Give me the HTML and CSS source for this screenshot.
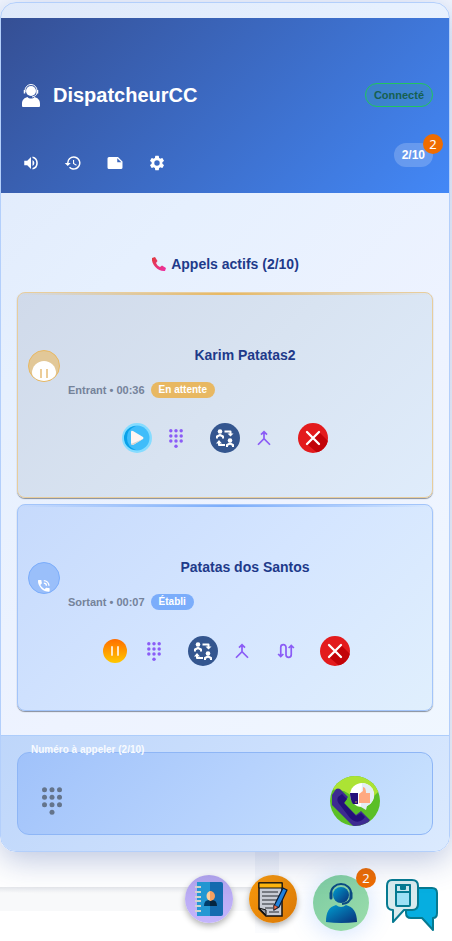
FILE: index.html
```html
<!DOCTYPE html>
<html lang="fr">
<head>
<meta charset="utf-8">
<meta name="viewport" content="width=device-width, initial-scale=1">
<title>DispatcheurCC</title>
<link rel="stylesheet" href="styles.css">
</head>
<body>
<svg class="defs" aria-hidden="true">
  <defs>
    <linearGradient id="sun" x2="0" y2="1"><stop stop-color="#ff6d00"/><stop offset="1" stop-color="#ffc800"/></linearGradient>
    <linearGradient id="agent-fill" x2="1" y2="1"><stop stop-color="#009ed0"/><stop offset="1" stop-color="#0a2f78"/></linearGradient>
    <linearGradient id="phone-fill" x2="1" y2="1"><stop stop-color="#e03a3a"/><stop offset="1" stop-color="#ee30a8"/></linearGradient>
    <clipPath id="round"><circle cx="25" cy="25" r="25"/></clipPath>
    <clipPath id="round-small"><circle cx="15" cy="15" r="15"/></clipPath>
  </defs>
  <symbol id="dialpad" viewBox="4 1 16 22">
    <circle cx="6" cy="3" r="2"/><circle cx="12" cy="3" r="2"/><circle cx="18" cy="3" r="2"/>
    <circle cx="6" cy="9" r="2"/><circle cx="12" cy="9" r="2"/><circle cx="18" cy="9" r="2"/>
    <circle cx="6" cy="15" r="2"/><circle cx="12" cy="15" r="2"/><circle cx="18" cy="15" r="2"/>
    <circle cx="12" cy="21" r="2"/>
  </symbol>
  <symbol id="transfer" viewBox="0 0 30 30">
    <circle cx="15" cy="15" r="15" fill="#34568f"/>
    <g fill="#fff"><circle cx="10" cy="8.500" r="2.300"/><circle cx="20" cy="17.500" r="2.300"/></g>
    <g fill="none" stroke="#fff" stroke-width="2" stroke-linejoin="round">
      <path d="M7 15.500v-2l3-1.500 3 1.500v2"/>
      <path d="M17 24v-2l3-1.500 3 1.500v2"/>
      <path d="M14.500 8.500h6V11M15 22H9v-2.500"/>
    </g>
    <path fill="#fff" d="M17.500 10.500h6l-3 3zM6 20.500h6l-3-3.500z"/>
  </symbol>
  <symbol id="merge" viewBox="0 0 24 24">
    <path fill="none" stroke="currentColor" stroke-width="2.300" d="M4 21l8-8 8 8M12 14V4M8 7.500l4-4 4 4"/>
  </symbol>
  <symbol id="hangup" viewBox="0 0 30 30">
    <circle cx="15" cy="15" r="15" fill="#e31b1d"/>
    <path clip-path="url(#round-small)" fill="#c20308" d="M21 9l12 12-9 13-15-13z"/>
    <path stroke="#fff" stroke-width="2.300" stroke-linecap="round" d="M9 9l12 12M21 9L9 21"/>
  </symbol>
</svg>

<main class="panel">
  <header class="top">
    <div class="title-row">
      <svg class="operator" viewBox="0 0 24 28" fill="#fff"><circle cx="12" cy="10" r="5"/><path d="M3 25v-2c0-4 2-6 5.500-7 1.500 2 5.500 2 7 0 3.500 1 5.500 3 5.500 7v2q0 1-1 1H4q-1 0-1-1z"/><path fill="none" stroke="#fff" d="M6 11V9.500a6 6 0 0 1 12 0v2c0 2.500-2 4-5 4.500"/><path stroke="#fff" stroke-width="1.500" d="M5.500 9v3.500M18.500 9v3.500"/></svg>
      <h1>DispatcheurCC</h1>
      <span class="status">Connecté</span>
    </div>
    <div class="tool-row">
      <button aria-label="Volume"><svg viewBox="0 0 24 24"><path d="M3 9v6h4l5 5V4L7 9H3zm13.500 3A4.500 4.500 0 0 0 14 8v8a4.500 4.500 0 0 0 2.500-4zM14 3.200v2.100a7 7 0 0 1 0 13.400v2.100a9 9 0 0 0 0-17.600z"/></svg></button>
      <button aria-label="Historique"><svg viewBox="0 0 24 24"><path d="M13 3a9 9 0 0 0-9 9H1l4 4 4-4H6a7 7 0 1 1 2.060 4.940l-1.420 1.420A9 9 0 1 0 13 3zm-1 5v5l4.280 2.540.72-1.210-3.500-2.080V8H12z"/></svg></button>
      <button aria-label="Notes"><svg viewBox="0 0 24 24"><path fill-rule="evenodd" d="M16 4H4a2 2 0 0 0-2 2v12a2 2 0 0 0 2 2h16a2 2 0 0 0 2-2v-8zm-1 1.500V11h5.500z"/></svg></button>
      <button aria-label="Paramètres"><svg viewBox="0 0 24 24"><path d="M19.140 12.940c.04-.3.06-.61.06-.94s-.02-.64-.07-.94l2.030-1.580a.5.5 0 0 0 .12-.61l-1.920-3.320a.5.5 0 0 0-.59-.22l-2.390.96a7 7 0 0 0-1.620-.94l-.36-2.540a.5.5 0 0 0-.48-.41h-3.840a.5.5 0 0 0-.47.410l-.36 2.540a7 7 0 0 0-1.620.94l-2.390-.96a.5.5 0 0 0-.59.220L2.740 8.870a.5.5 0 0 0 .12.610l2.030 1.580a6 6 0 0 0 0 1.880l-2.030 1.580a.5.5 0 0 0-.12.610l1.920 3.320c.12.220.37.290.59.220l2.390-.96c.5.380 1.030.7 1.620.94l.36 2.540c.05.240.24.410.48.410h3.840c.24 0 .44-.17.47-.41l.36-2.540a7 7 0 0 0 1.620-.94l2.390.96c.22.080.47 0 .59-.22l1.920-3.320a.5.5 0 0 0-.12-.61zM12 15.600A3.600 3.600 0 1 1 12 8.400a3.600 3.600 0 0 1 0 7.200z"/></svg></button>
      <span class="counter">2/10<span class="badge">2</span></span>
    </div>
  </header>

  <section class="calls">
    <h2><svg viewBox="0 0 16 16"><path fill="url(#phone-fill)" d="M1 2l3-1 2.500 4-1.500 2c1 2 2 3 4 4l2-1.500 4 2.500-1 3C8 16 0 9 1 2z"/></svg>Appels actifs (2/10)</h2>

    <article class="card waiting">
      <div class="call">
        <span class="avatar"><svg viewBox="0 0 30 30"><circle cx="15" cy="22" r="12" fill="#fff"/><path stroke="#e6bd77" stroke-width="1.500" d="M12 18v9M18 18v9"/></svg></span>
        <div class="info">
          <h3>Karim Patatas2</h3>
          <p>Entrant • 00:36 <span class="tag">En attente</span></p>
        </div>
      </div>
      <div class="actions">
        <button aria-label="Reprendre"><svg viewBox="0 0 30 30"><circle cx="15" cy="15" r="15" fill="#86dcff"/><circle cx="15" cy="15" r="12.500" fill="#40bdfa"/><path fill="#0aa2e9" d="M14 3a12 12 0 0 0 0 24q-9-3-9-12t9-12z"/><path fill="#fff5f2" d="M9 9q0-2 2-1l10 6q1 1 0 2l-10 6q-2 0-2-2z"/><path fill="#d8d3cf" d="M9 21l12-5-10 6q-2 0-2-1z"/></svg></button>
        <button class="plain" aria-label="Clavier"><svg class="keys"><use href="#dialpad"/></svg></button>
        <button aria-label="Transférer"><svg><use href="#transfer"/></svg></button>
        <button class="plain" aria-label="Fusionner"><svg><use href="#merge"/></svg></button>
        <button aria-label="Raccrocher"><svg><use href="#hangup"/></svg></button>
      </div>
    </article>

    <article class="card active">
      <div class="call">
        <span class="avatar"><svg viewBox="0 0 30 30"><g transform="translate(7 15) scale(.65)" fill="#fff"><path d="M20 15.500c-1.250 0-2.450-.2-3.570-.57a1 1 0 0 0-1 .24l-2.200 2.200a15 15 0 0 1-6.600-6.600l2.200-2.200a1 1 0 0 0 .25-1A11 11 0 0 1 8.500 4a1 1 0 0 0-1-1H4a1 1 0 0 0-1 1 17 17 0 0 0 17 17 1 1 0 0 0 1-1v-3.500a1 1 0 0 0-1-1zM19 12h2a9 9 0 0 0-9-9v2a7 7 0 0 1 7 7zm-4 0h2a5 5 0 0 0-5-5v2a3 3 0 0 1 3 3z"/></g></svg></span>
        <div class="info">
          <h3>Patatas dos Santos</h3>
          <p>Sortant • 00:07 <span class="tag">Établi</span></p>
        </div>
      </div>
      <div class="actions">
        <button aria-label="Mettre en attente"><svg viewBox="0 0 30 30"><circle cx="15" cy="15" r="12" fill="url(#sun)"/><path stroke="#ffe6c4" stroke-width="2" stroke-linecap="round" d="M12 11v8M18 11v8"/></svg></button>
        <button class="plain" aria-label="Clavier"><svg class="keys"><use href="#dialpad"/></svg></button>
        <button aria-label="Transférer"><svg><use href="#transfer"/></svg></button>
        <button class="plain" aria-label="Fusionner"><svg><use href="#merge"/></svg></button>
        <button class="plain" aria-label="Permuter"><svg viewBox="0 0 24 24" fill="none" stroke="currentColor" stroke-width="2.300"><path d="M5 19V7a3.500 3.500 0 0 1 7 0v10a3.500 3.500 0 0 0 7 0V5M1.500 16L5 19.500 8.500 16M15.500 8L19 4.500 22.500 8"/></svg></button>
        <button aria-label="Raccrocher"><svg><use href="#hangup"/></svg></button>
      </div>
    </article>
  </section>

  <footer class="dialer">
    <div class="field">
      <label for="number">Numéro à appeler (2/10)</label>
      <button class="open-keys" aria-label="Clavier"><svg><use href="#dialpad"/></svg></button>
      <input id="number" type="tel">
      <button class="dial" aria-label="Appeler"><svg viewBox="0 0 50 50"><g clip-path="url(#round)"><path fill="#5abf26" d="M0 0h50v50H0z"/><path fill="#ace334" d="M0 13V0h50v14L36 28 14 15z"/><path fill="#3d2b91" d="M2 19l4-6q2-1 4 0l8 8-4 6 12 12 5-4 9 9-6 8H25L2 29z"/><path fill="#24107a" d="M8 21l4-3 5 5-3 4 12 13 5-3 4 4c-4 6-10 6-15 1L10 29q-4-4-2-8z"/><circle cx="32" cy="19" r="12" fill="#fff"/><path fill="#e3edf4" d="M32 7a12 12 0 0 1 5 23l-1 4-5-3z"/><path fill="#24107a" d="M20 17h8v11h-5q-3-4-3-11z"/><path fill="#ffa980" d="M29 18l4-3v-4q3 0 3 6h4v10H29z"/><circle cx="26" cy="26" r=".7" fill="#f9c22e"/></g></svg></button>
    </div>
  </footer>
</main>

<nav class="dock">
  <button class="contacts" aria-label="Contacts"><svg viewBox="0 0 48 48"><path fill="#2398d3" d="M12 7h14v34H12z"/><path fill="#166cb0" d="M25 7h11q2 0 2 2v30q0 2-2 2H25z"/><path stroke="#d0d3cf" stroke-width="2" d="M10 12h6M10 17h6M10 22h6M10 26h6M10 31h6M10 36h6"/><path fill="#003e6b" d="M19 31q0-6 5-6h2v6z"/><path fill="#052540" d="M25 25h2q5 0 5 6h-7z"/><path fill="#ffce9c" d="M26 16a4.500 5 0 0 0 0 10z"/><path fill="#f7a060" d="M25 16a5 5 0 0 1 0 10z"/></svg></button>
  <button class="notes" aria-label="Notes"><svg viewBox="0 0 48 48"><path fill="#c7cbd4" stroke="#111" stroke-width="1.500" d="M10 8h23v33H17l-7-7z"/><path fill="#ffb60e" stroke="#111" d="M10 8h23v5H10z"/><path stroke="#272b31" stroke-width="1.200" d="M13 17h16M13 21h17M13 25h15M13 29h12M16 33h8M20 37h10"/><path fill="#8b9099" stroke="#111" d="M10 33l7 2v5z"/><path fill="#2182dd" stroke="#081c36" stroke-width="1.200" d="M34 13l4 2-8 17-5 3v-4z"/><path fill="#ff7654" stroke="#3b1b16" stroke-width=".7" d="M25 30l4 2-4 3z"/></svg></button>
  <button class="agent" aria-label="Agent"><svg viewBox="0 0 56 56"><g fill="url(#agent-fill)"><circle cx="28" cy="20" r="8"/><path d="M13 47c0-10 3-15 10-17q5 4 10 0c7 2 11 7 11 17q-16 2-31 0z"/></g><path fill="none" stroke="#0b4b83" stroke-width="2" d="M18 20v-2a10 9 0 0 1 20 0v4q-1 6-9 7"/><path stroke="#0b4b83" stroke-width="3" stroke-linecap="round" d="M18 18v5M38 18v5"/></svg><span class="badge">2</span></button>
  <button class="chat" aria-label="Messages"><svg viewBox="0 0 54 58" stroke="#067a91" stroke-width="2" stroke-linejoin="round"><path fill="#06aee0" d="M28 13h19q5 0 5 5v20q0 5-4 5v12L37 43H26q-5 0-5-5V18z"/><path fill="#d9ebee" d="M7 5h20q6 0 6 6v18q0 6-6 6h-8L8 47V35q-6 0-6-6V11q0-6 5-6z"/><rect x="11" y="10" width="14" height="21" rx="1" fill="#9de0f5"/><path fill="#cbe8ee" d="M11 10h14v7H11z"/><path fill="#067a91" d="M16 10h4v4h-4z"/></svg></button>
</nav>
</body>
</html>
```

FILE: styles.css
```css
* { box-sizing: border-box; }

body {
  margin: 0;
  min-height: 100vh;
  padding-top: 2px;
  overflow: hidden;
  font-family: "Liberation Sans", Arial, sans-serif;
  background: linear-gradient(#f3f7ff, #fff 90%);
}

h1, h2, h3, p { margin: 0; }

button {
  display: grid;
  place-items: center;
  padding: 0;
  border: 0;
  background: none;
  color: inherit;
  cursor: pointer;
}

.defs { position: absolute; width: 0; height: 0; }

.panel {
  position: relative;
  z-index: 1;
  margin-right: 2px;
  padding-top: 15px;
  border: 1px solid #b3cffb;
  border-radius: 16px;
  overflow: hidden;
  background: linear-gradient(135deg, #dfe9fa, #e6f0fe 30%, #eef3ff 60%, #f0f8ff);
  box-shadow: 0 8px 32px rgba(30, 64, 150, .3);
}

.top {
  padding: 53px 16px 6px;
  color: #fff;
  background: linear-gradient(135deg, #354f94, #4388f7);
}

.title-row, .tool-row { display: flex; align-items: center; height: 48px; }
.title-row { margin-bottom: 20px; padding-left: 2px; }
.operator { width: 24px; height: 28px; margin-right: 10px; }
h1 { font-size: 20px; line-height: 24px; }

.status {
  margin-left: auto;
  padding: 0 8px;
  border: 1px solid #22c55e;
  border-radius: 12px;
  font-size: 11px;
  font-weight: bold;
  line-height: 22px;
  color: #166050;
  background: rgba(52, 160, 160, .25);
}

.tool-row { gap: 14px; }
.tool-row button { width: 28px; height: 28px; }
.tool-row svg { width: 18px; height: 18px; fill: #fff; }

.counter {
  position: relative;
  align-self: flex-start;
  margin: 4px 0 0 auto;
  padding: 0 8px;
  border-radius: 12px;
  font-size: 12px;
  font-weight: bold;
  line-height: 24px;
  background: rgba(255, 255, 255, .2);
}

.badge {
  position: absolute;
  top: -9px;
  right: -10px;
  width: 20px;
  height: 20px;
  border-radius: 50%;
  background: #ef6c00;
  color: #fff;
  font: 13px/20px "Noto Sans", sans-serif;
  text-align: center;
}

.calls { padding: 59px 16px 24px; }

h2 {
  display: flex;
  align-items: center;
  justify-content: center;
  gap: 4px;
  margin-bottom: 16px;
  font-size: 14px;
  line-height: 24px;
  color: #1e3a8a;
}
h2 svg { width: 16px; height: 16px; }

.card {
  position: relative;
  padding: 52px 10px 44px;
  border: 1px solid #e8cd9c;
  border-radius: 8px;
  overflow: hidden;
  box-shadow: 0 1px 1px rgba(30, 41, 59, .5);
}
.card + .card { margin-top: 6px; }

.card::before {
  content: "";
  position: absolute;
  inset: 0 0 auto;
  height: 2px;
  background: linear-gradient(90deg, transparent, var(--accent), transparent);
}

.waiting {
  --accent: #e8b862;
  --avatar: #e2c898;
  background: linear-gradient(135deg, #d0daea, #d8e3f1 50%, #dfecfb);
}
.active {
  --accent: #7badfb;
  --avatar: #9abffa;
  border-color: #a3c5fa;
  background: linear-gradient(135deg, #c6dafc, #d4e5ff 50%, #e0effd);
}

.call { display: flex; gap: 8px; }

.avatar {
  flex: none;
  width: 32px;
  height: 32px;
  margin-top: 5px;
  border: 1px solid var(--accent);
  border-radius: 50%;
  overflow: hidden;
  background: var(--avatar);
}
.avatar svg { display: block; width: 30px; height: 30px; }

.info { flex: 1; }
.info h3 {
  margin-bottom: 15px;
  font-size: 14px;
  line-height: 20px;
  text-align: center;
  color: #1e3a8a;
}
.info p {
  display: flex;
  align-items: center;
  gap: 6px;
  height: 20px;
  font-size: 11px;
  font-weight: bold;
  color: #75839a;
}

.tag {
  padding: 0 8px;
  border-radius: 8px;
  background: var(--accent);
  color: #fff;
  font-size: 10px;
  line-height: 16px;
}

.actions {
  display: flex;
  align-items: center;
  justify-content: center;
  gap: 14px;
  margin-top: 23px;
  color: #8b5cf6;
}
.active .actions { margin-top: 24px; }
.actions button { width: 30px; height: 30px; }
.actions svg { width: 30px; height: 30px; }
.actions .plain { width: 20px; margin-right: 10px; }
.actions .plain svg { width: 18px; height: 18px; }
.actions .plain .keys { width: 14px; height: 19px; fill: currentColor; }

.dialer {
  padding: 16px;
  border-top: 1px solid #adcdfb;
  background: linear-gradient(135deg, #bed6fa, #cbdffd 50%, #dbeafe);
}

.field {
  position: relative;
  display: flex;
  align-items: center;
  height: 83px;
  padding: 14px 52px 0 20px;
  border: 1px solid #8eb6f6;
  border-radius: 12px;
  background: linear-gradient(135deg, #a0c2fa, #b6d2fd 50%, #cae3fe);
}
.field label {
  position: absolute;
  top: -11px;
  left: 13px;
  font-size: 10px;
  font-weight: bold;
  line-height: 16px;
  color: #f8fbff;
}
.field input {
  flex: 1;
  min-width: 0;
  height: 40px;
  border: 0;
  outline: 0;
  background: transparent;
}
.open-keys { width: 28px; height: 32px; fill: #64748b; }
.open-keys svg { width: 20px; height: 28px; }
.dial, .dial svg { width: 50px; height: 50px; }

.dock {
  display: flex;
  justify-content: flex-end;
  align-items: flex-start;
  gap: 16px;
  padding: 23px 13px 0 0;
  background:
    linear-gradient(#e4e6ea, #f8f9fa 6px) 0 35px / 254px 24px no-repeat,
    linear-gradient(#f4f6fa, #fbfcfe) 255px 0 / 24px 100% no-repeat;
}
.dock button { position: relative; border-radius: 50%; }
.dock svg { display: block; width: 100%; height: 100%; }
.contacts, .notes { width: 48px; height: 48px; box-shadow: 0 3px 6px rgba(0, 0, 0, .3); }
.dock .contacts { background: linear-gradient(#b2a4ed, #c4b5fd); }
.dock .notes { background: linear-gradient(135deg, #f99b0c, #d97706); }
.dock .agent { width: 56px; height: 56px; background: linear-gradient(135deg, #7ccba2, #9bddab); box-shadow: 0 2px 24px rgba(59, 130, 246, .25); }
.dock .chat { width: 54px; height: 58px; border-radius: 0; }
.agent .badge { top: -7px; right: -7px; }
```
